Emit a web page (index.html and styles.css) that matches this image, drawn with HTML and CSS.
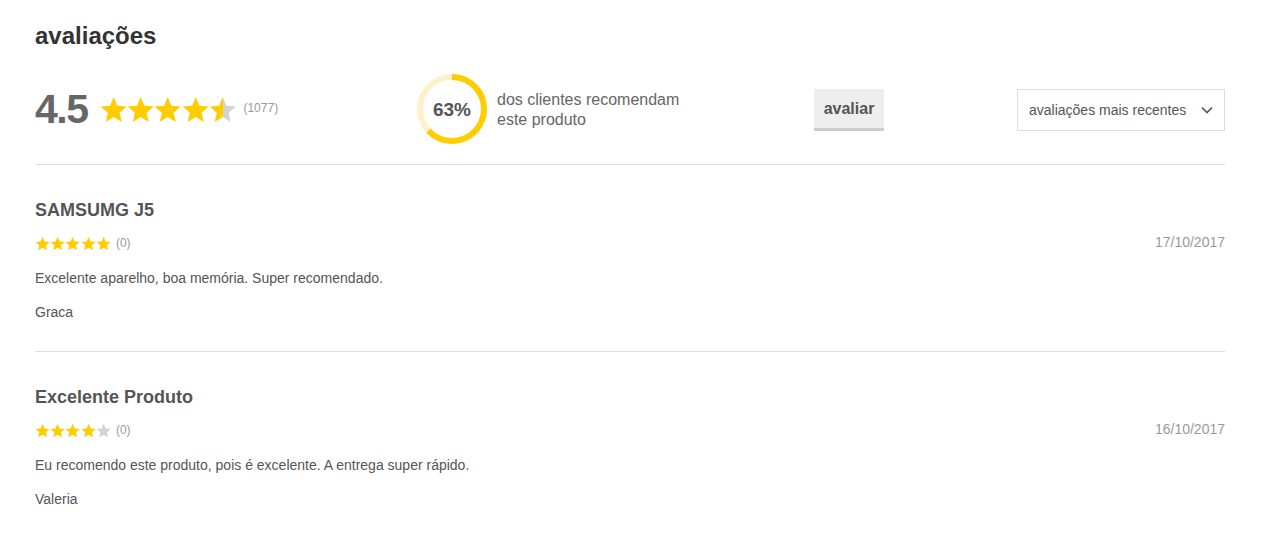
FILE: index.html
```html
<!DOCTYPE html>
<html lang="pt">
<head>
<meta charset="utf-8">
<title>avaliações</title>
<link rel="stylesheet" href="styles.css">
</head>
<body>
<svg width="0" height="0" class="defs" aria-hidden="true">
  <defs>
    <symbol id="star" viewBox="0 0 24 23.3"><path d="M12 0.8L15.17 8.43 23.41 9.09 17.14 14.47 19.05 22.51 12 18.2 4.95 22.51 6.86 14.47 0.59 9.09 8.83 8.43z"/></symbol>
    <linearGradient id="half" x1="0" x2="1" y1="0" y2="0">
      <stop offset="0.52" stop-color="#ffcc00"/>
      <stop offset="0.52" stop-color="#d3d3d3"/>
    </linearGradient>
  </defs>
</svg>
<main class="reviews">
  <h1 class="title">avaliações</h1>
  <section class="summary">
    <div class="score">
      <span class="score-num">4.5</span>
      <span class="stars stars-lg">
        <svg class="on"><use href="#star"/></svg>
        <svg class="on"><use href="#star"/></svg>
        <svg class="on"><use href="#star"/></svg>
        <svg class="on"><use href="#star"/></svg>
        <svg class="halfstar"><use href="#star"/></svg>
      </span>
      <span class="count">(1077)</span>
    </div>
    <div class="recommend">
      <div class="ring">
        <svg viewBox="0 0 70 70" class="ring-svg">
          <circle cx="35" cy="35" r="32" class="ring-bg"/>
          <circle cx="35" cy="35" r="32" class="ring-fg" style="stroke-dasharray: 126.7 201.1"/>
        </svg>
        <span class="ring-label">63%</span>
      </div>
      <p class="recommend-text">dos clientes recomendam<br>este produto</p>
    </div>
    <button class="btn-rate">avaliar</button>
    <div class="sort">
      <span>avaliações mais recentes</span>
      <svg class="chev" viewBox="0 0 12 8"><path d="M1 1.5l5 5 5-5"/></svg>
    </div>
  </section>

  <article class="review">
    <h2 class="review-title">SAMSUMG J5</h2>
    <div class="review-meta">
      <span class="stars stars-sm">
        <svg class="on"><use href="#star"/></svg>
        <svg class="on"><use href="#star"/></svg>
        <svg class="on"><use href="#star"/></svg>
        <svg class="on"><use href="#star"/></svg>
        <svg class="on"><use href="#star"/></svg>
      </span>
      <span class="likes">(0)</span>
      <span class="date">17/10/2017</span>
    </div>
    <p class="review-text">Excelente aparelho, boa memória. Super recomendado.</p>
    <p class="review-author">Graca</p>
  </article>

  <article class="review">
    <h2 class="review-title">Excelente Produto</h2>
    <div class="review-meta">
      <span class="stars stars-sm">
        <svg class="on"><use href="#star"/></svg>
        <svg class="on"><use href="#star"/></svg>
        <svg class="on"><use href="#star"/></svg>
        <svg class="on"><use href="#star"/></svg>
        <svg class="off"><use href="#star"/></svg>
      </span>
      <span class="likes">(0)</span>
      <span class="date">16/10/2017</span>
    </div>
    <p class="review-text">Eu recomendo este produto, pois é excelente. A entrega super rápido.</p>
    <p class="review-author">Valeria</p>
  </article>
</main>
</body>
</html>
```
FILE: styles.css
```css
* { box-sizing: border-box; }
html, body { margin: 0; padding: 0; background: #fff; }
body { font-family: "Liberation Sans", Arial, sans-serif; color: #555; }
.defs { position: absolute; width: 0; height: 0; overflow: hidden; }

.reviews { width: 1190px; margin-left: 35px; padding-top: 22px; }

.title { margin: 0 0 24px; font-size: 24px; line-height: 28px; font-weight: bold; color: #333; }

.summary { display: flex; align-items: center; height: 70px; border-bottom: 1px solid #ddd; box-sizing: content-box; padding-bottom: 20px; }
.score { width: 382px; display: flex; align-items: center; }
.score-num { font-size: 41px; font-weight: bold; color: #666; letter-spacing: -1.5px; line-height: 1; margin-right: 12px; }
.stars { display: inline-flex; }
.stars svg { display: block; fill: #ffcc00; }
.stars svg.off { fill: #d3d3d3; }
.stars svg.halfstar { fill: url(#half); }
.stars-lg svg { width: 27.4px; height: 27px; }
.count { font-size: 12px; color: #999; margin-left: 7px; margin-top: -2px; }

.recommend { width: 397px; display: flex; align-items: center; }
.ring { position: relative; width: 70px; height: 70px; }
.ring-svg { width: 70px; height: 70px; display: block; transform: rotate(-90deg); }
.ring-bg { fill: none; stroke: #fdf1c9; stroke-width: 6; }
.ring-fg { fill: none; stroke: #ffcc00; stroke-width: 6; }
.ring-label { position: absolute; inset: 0; display: flex; align-items: center; justify-content: center; font-size: 19px; font-weight: bold; color: #555; padding-top: 2px; }
.recommend-text { margin: 0 0 0 10px; font-size: 16px; line-height: 20px; color: #666; padding-top: 1px; }

.btn-rate { width: 70px; height: 42px; border: 0; border-bottom: 3px solid #ccc; background: #eee; font-family: inherit; font-size: 16px; font-weight: bold; color: #555; padding: 2px 0 0; margin-top: 1px; }

.sort { margin-left: auto; width: 208px; height: 42px; border: 1px solid #ddd; display: flex; align-items: center; justify-content: space-between; padding: 0 11px 0 11px; font-size: 14px; color: #555; margin-top: 1px; }
.chev { width: 12px; height: 8px; fill: none; stroke: #555; stroke-width: 1.6; }

.review { padding: 35px 0 30px; border-bottom: 1px solid #ddd; }
.review:last-child { border-bottom: 0; }
.review-title { margin: 0 0 14px; font-size: 18px; line-height: 21px; font-weight: bold; color: #555; }
.review-meta { display: flex; align-items: center; height: 16px; }
.stars-sm svg { width: 15.2px; height: 15px; }
.likes { font-size: 12px; color: #999; margin-left: 5px; }
.date { margin-left: auto; font-size: 14px; color: #999; margin-top: -2px; }
.review-text { margin: 19px 0 0; font-size: 14px; line-height: 17px; color: #555; }
.review-author { margin: 17px 0 0; font-size: 14px; line-height: 17px; color: #555; }
```
